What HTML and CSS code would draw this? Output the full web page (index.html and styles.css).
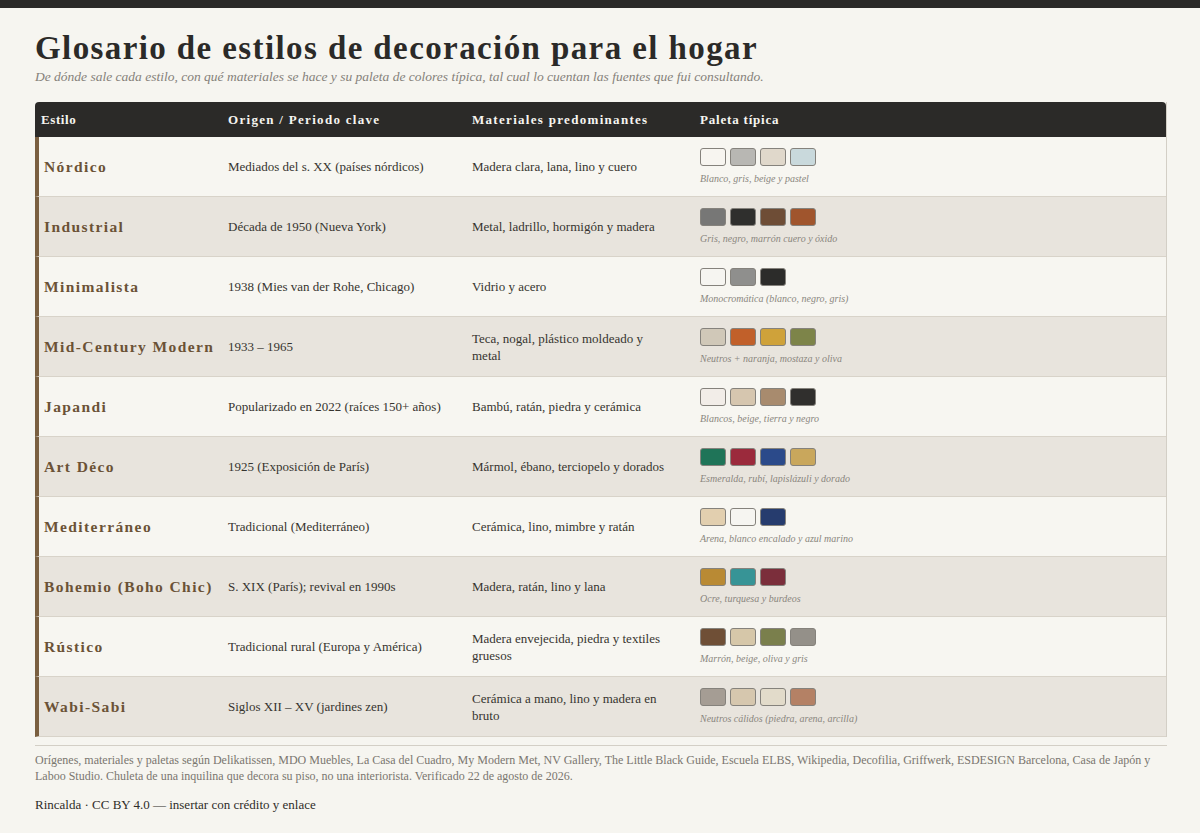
FILE: index.html
```html
<!DOCTYPE html>
<html lang="es">
<head>
<meta charset="utf-8">
<title>Glosario de estilos de decoración para el hogar</title>
<link rel="stylesheet" href="styles.css">
</head>
<body>
<div class="topbar"></div>
<main class="page">
  <h1 class="title">Glosario de estilos de decoración para el hogar</h1>
  <p class="subtitle">De dónde sale cada estilo, con qué materiales se hace y su paleta de colores típica, tal cual lo cuentan las fuentes que fui consultando.</p>

  <table class="glossary">
    <colgroup>
      <col class="c-style"><col class="c-origin"><col class="c-mat"><col class="c-pal">
    </colgroup>
    <thead>
      <tr>
        <th>Estilo</th>
        <th>Origen / Periodo clave</th>
        <th>Materiales predominantes</th>
        <th>Paleta típica</th>
      </tr>
    </thead>
    <tbody>
      <tr>
        <td class="name">Nórdico</td>
        <td>Mediados del s. XX (países nórdicos)</td>
        <td class="mat">Madera clara, lana, lino y cuero</td>
        <td><div class="swatches"><span class="sw" style="background:#f7f5f0"></span><span class="sw" style="background:#b8b7b3"></span><span class="sw" style="background:#e0d8cb"></span><span class="sw" style="background:#c9d9dc"></span></div><div class="cap">Blanco, gris, beige y pastel</div></td>
      </tr>
      <tr>
        <td class="name">Industrial</td>
        <td>Década de 1950 (Nueva York)</td>
        <td class="mat">Metal, ladrillo, hormigón y madera</td>
        <td><div class="swatches"><span class="sw" style="background:#777776"></span><span class="sw" style="background:#2f2f2d"></span><span class="sw" style="background:#6e4d36"></span><span class="sw" style="background:#a0552d"></span></div><div class="cap">Gris, negro, marrón cuero y óxido</div></td>
      </tr>
      <tr>
        <td class="name">Minimalista</td>
        <td>1938 (Mies van der Rohe, Chicago)</td>
        <td class="mat">Vidrio y acero</td>
        <td><div class="swatches"><span class="sw" style="background:#f6f5f1"></span><span class="sw" style="background:#8f8f8d"></span><span class="sw" style="background:#2c2c2a"></span></div><div class="cap">Monocromática (blanco, negro, gris)</div></td>
      </tr>
      <tr>
        <td class="name">Mid-Century Modern</td>
        <td>1933 – 1965</td>
        <td class="mat">Teca, nogal, plástico moldeado y metal</td>
        <td><div class="swatches"><span class="sw" style="background:#d0c8b8"></span><span class="sw" style="background:#c1602a"></span><span class="sw" style="background:#cfa23a"></span><span class="sw" style="background:#7d8449"></span></div><div class="cap">Neutros + naranja, mostaza y oliva</div></td>
      </tr>
      <tr>
        <td class="name">Japandi</td>
        <td>Popularizado en 2022 (raíces 150+ años)</td>
        <td class="mat">Bambú, ratán, piedra y cerámica</td>
        <td><div class="swatches"><span class="sw" style="background:#f2ede8"></span><span class="sw" style="background:#d6c6af"></span><span class="sw" style="background:#a88b6e"></span><span class="sw" style="background:#302f2d"></span></div><div class="cap">Blancos, beige, tierra y negro</div></td>
      </tr>
      <tr>
        <td class="name">Art Déco</td>
        <td>1925 (Exposición de París)</td>
        <td class="mat">Mármol, ébano, terciopelo y dorados</td>
        <td><div class="swatches"><span class="sw" style="background:#1f7458"></span><span class="sw" style="background:#9b2a3c"></span><span class="sw" style="background:#2b4a8a"></span><span class="sw" style="background:#c9a75c"></span></div><div class="cap">Esmeralda, rubí, lapislázuli y dorado</div></td>
      </tr>
      <tr>
        <td class="name">Mediterráneo</td>
        <td>Tradicional (Mediterráneo)</td>
        <td class="mat">Cerámica, lino, mimbre y ratán</td>
        <td><div class="swatches"><span class="sw" style="background:#e2cfaf"></span><span class="sw" style="background:#f6f5f1"></span><span class="sw" style="background:#263c6e"></span></div><div class="cap">Arena, blanco encalado y azul marino</div></td>
      </tr>
      <tr>
        <td class="name">Bohemio (Boho Chic)</td>
        <td>S. XIX (París); revival en 1990s</td>
        <td class="mat">Madera, ratán, lino y lana</td>
        <td><div class="swatches"><span class="sw" style="background:#b98a34"></span><span class="sw" style="background:#379496"></span><span class="sw" style="background:#7b2e3b"></span></div><div class="cap">Ocre, turquesa y burdeos</div></td>
      </tr>
      <tr>
        <td class="name">Rústico</td>
        <td>Tradicional rural (Europa y América)</td>
        <td class="mat">Madera envejecida, piedra y textiles gruesos</td>
        <td><div class="swatches"><span class="sw" style="background:#6f4f36"></span><span class="sw" style="background:#d6c7a9"></span><span class="sw" style="background:#7a7f4c"></span><span class="sw" style="background:#949089"></span></div><div class="cap">Marrón, beige, oliva y gris</div></td>
      </tr>
      <tr>
        <td class="name">Wabi-Sabi</td>
        <td>Siglos XII – XV (jardines zen)</td>
        <td class="mat">Cerámica a mano, lino y madera en bruto</td>
        <td><div class="swatches"><span class="sw" style="background:#a59d94"></span><span class="sw" style="background:#d6c7ae"></span><span class="sw" style="background:#e2dbca"></span><span class="sw" style="background:#b48165"></span></div><div class="cap">Neutros cálidos (piedra, arena, arcilla)</div></td>
      </tr>
    </tbody>
  </table>

  <footer class="foot">
    <p class="sources">Orígenes, materiales y paletas según Delikatissen, MDO Muebles, La Casa del Cuadro, My Modern Met, NV Gallery, The Little Black Guide, Escuela ELBS, Wikipedia, Decofilia, Griffwerk, ESDESIGN Barcelona, Casa de Japón y Laboo Studio. Chuleta de una inquilina que decora su piso, no una interiorista. Verificado 22 de agosto de 2026.</p>
    <p class="credit">Rincalda · CC BY 4.0 — insertar con crédito y enlace</p>
  </footer>
</main>
</body>
</html>
```

FILE: styles.css
```css
* { box-sizing: border-box; }
html, body { margin: 0; padding: 0; }
body {
  background: #f6f5f0;
  color: #2c2b28;
  font-family: "Liberation Serif", "Times New Roman", serif;
}
.topbar {
  height: 8px;
  background: #2b2a28;
}
.page {
  padding: 22px 33px 0 35px;
}
.title {
  margin: 0;
  font-size: 33px;
  line-height: 36px;
  font-weight: bold;
  color: #2b2a28;
  letter-spacing: 1.4px;
}
.subtitle {
  margin: 2px 0 16px 0;
  font-style: italic;
  font-size: 13.5px;
  line-height: 18px;
  color: #85817a;
}
.glossary {
  width: 1132px;
  border-collapse: separate;
  border-spacing: 0;
  table-layout: fixed;
  border-right: 1px solid #d3cfc6;
}
.c-style { width: 187px; }
.c-origin { width: 244px; }
.c-mat { width: 228px; }
.glossary thead th {
  background: #2b2a28;
  color: #f6f5f0;
  text-align: left;
  font-size: 13px;
  font-weight: bold;
  letter-spacing: 1.3px;
  height: 35px;
  padding: 0 6px;
}
.glossary thead th:first-child { border-top-left-radius: 4px; letter-spacing: 0.6px; }
.glossary thead th:last-child { border-top-right-radius: 4px; letter-spacing: 0.8px; }
.glossary tbody td {
  height: 60px;
  padding: 0 6px;
  font-size: 13px;
  line-height: 17px;
  color: #36342f;
  border-bottom: 1px solid #d8d3c9;
  vertical-align: middle;
}
.glossary tbody td.mat { padding-right: 24px; }
.glossary tbody tr:nth-child(odd) td { background: #f7f6f1; }
.glossary tbody tr:nth-child(even) td { background: #e8e4dd; }
.glossary tbody td.name {
  border-left: 4px solid #7a5f40;
  padding-left: 5px;
  font-size: 15.5px;
  font-weight: bold;
  color: #6b5236;
  letter-spacing: 1.4px;
}
.swatches {
  display: flex;
  gap: 4px;
}
.sw {
  display: block;
  width: 26px;
  height: 18px;
  border-radius: 3px;
  border: 1px solid #85827c;
}
.cap {
  margin-top: 7px;
  font-style: italic;
  font-size: 10px;
  line-height: 12px;
  color: #8a867e;
}
.foot {
  margin-top: 8px;
  border-top: 1px solid #d3cfc6;
  width: 1132px;
  padding-top: 6px;
}
.sources {
  margin: 0;
  font-size: 12px;
  line-height: 16px;
  color: #7a766f;
}
.credit {
  margin: 12px 0 0 0;
  font-size: 13px;
  line-height: 18px;
  color: #2f2d29;
}
```
